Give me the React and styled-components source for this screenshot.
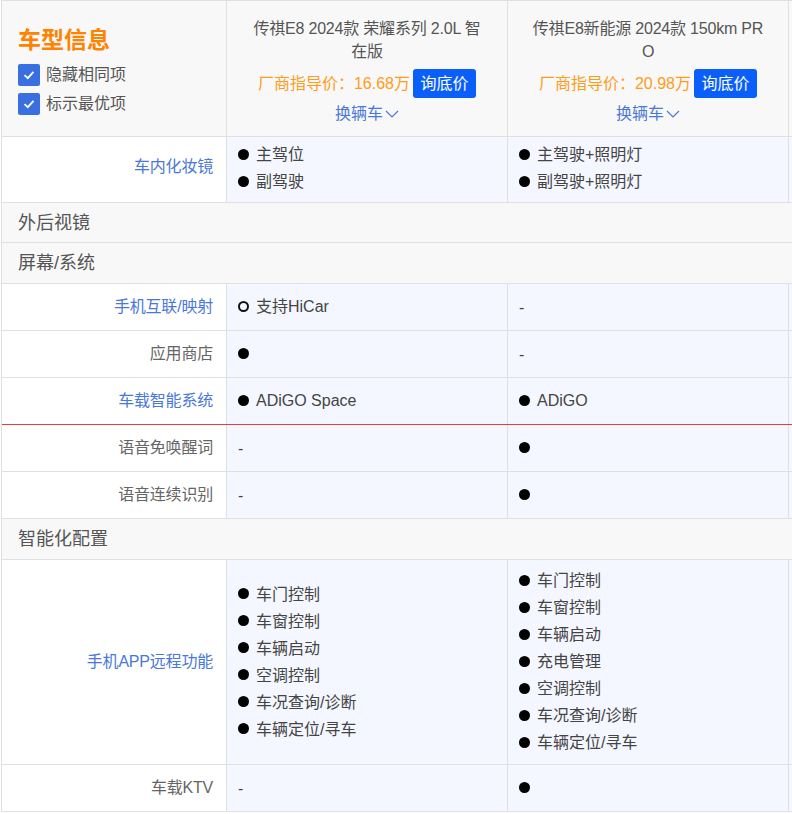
import React from 'react';
import styled, { createGlobalStyle } from 'styled-components';

const GlobalStyle = createGlobalStyle`
  html, body {
    margin: 0;
    padding: 0;
    background: #fff;
    overflow: hidden;
  }
  * { box-sizing: border-box; }
`;

const Page = styled.div`
  width: 792px;
  height: 814px;
  overflow: hidden;
  position: relative;
  padding-left: 1px;
  font-family: "Liberation Sans", "Noto Sans CJK SC", sans-serif;
  font-size: 16px;
  line-height: 20px;
  color: #555;
`;

const RedLine = styled.div`
  position: absolute;
  left: 2px;
  right: 0;
  top: 424px;
  height: 1px;
  background: #f03a3a;
`;

const Row = styled.div`
  display: grid;
  grid-template-columns: 225px 281px 281px 20px;
  width: 808px;
  height: ${(p) => p.$h}px;
  border-bottom: 1px solid #e0e0e0;
  border-left: 1px solid #e0e0e0;
`;

const HeadRow = styled(Row)`
  border-top: 1px solid #e0e0e0;
  background: #f8f8f8;
`;

const HeadCorner = styled.div`
  padding: 24px 0 0 16px;
  border-right: 1px solid #e0e0e0;
`;

const Title = styled.div`
  font-size: 23px;
  line-height: 30px;
  font-weight: 700;
  color: #ff8200;
  margin-bottom: 5px;
`;

const CheckRow = styled.label`
  display: flex;
  align-items: center;
  gap: 6px;
  height: 29px;
  color: #555;
`;

const CheckBox = styled.span`
  width: 22px;
  height: 22px;
  border-radius: 2px;
  background: #3a6fe2;
  display: flex;
  align-items: center;
  justify-content: center;
`;

const CarCell = styled.div`
  padding: 16px 20px 0;
  text-align: center;
  border-right: 1px solid #e0e0e0;
  word-break: break-all;
`;

const CarName = styled.div`
  line-height: 23px;
  letter-spacing: -0.2px;
  color: #555;
`;

const PriceLine = styled.div`
  display: flex;
  align-items: center;
  justify-content: center;
  gap: 3px;
  margin-top: 6px;
  margin-inline: -10px;
  color: #ff9c1a;
`;

const AskButton = styled.button`
  width: 63px;
  height: 29px;
  padding: 0;
  border: none;
  border-radius: 3px;
  background: #0a5ffb;
  color: #fff;
  font: inherit;
`;

const SwapLink = styled.div`
  display: flex;
  align-items: center;
  justify-content: center;
  gap: 2px;
  margin-top: 5px;
  line-height: 22px;
  color: #4a78d8;
`;

const Label = styled.div`
  display: flex;
  align-items: center;
  justify-content: flex-end;
  padding-right: 13px;
  padding-bottom: ${(p) => p.$lift}px;
  letter-spacing: -0.2px;
  background: #fff;
  border-right: 1px solid #e0e0e0;
  color: ${(p) => (p.$link ? '#4a78d8' : '#666')};
`;

const Cell = styled.div`
  display: flex;
  flex-direction: column;
  justify-content: center;
  padding-left: 11px;
  padding-bottom: ${(p) => p.$lift || 0}px;
  background: #f4f7ff;
  border-right: 1px solid #e0e0e0;
`;

const Item = styled.div`
  display: flex;
  align-items: center;
  height: 27px;
  color: #444;
`;

const Dash = styled(Item)`
  padding-top: 2px;
`;

const Dot = styled.span`
  width: 11px;
  height: 11px;
  border-radius: 50%;
  flex: none;
  margin-right: ${(p) => (p.$text ? 7 : 0)}px;
  margin-bottom: 2px;
  background: ${(p) => (p.$hollow ? 'transparent' : '#000')};
  border: ${(p) => (p.$hollow ? '2px solid #111' : 'none')};
`;

const Section = styled.div`
  display: flex;
  align-items: center;
  width: 808px;
  height: ${(p) => p.$h}px;
  padding-left: 16px;
  font-size: 18px;
  background: #f8f8f8;
  color: #555;
  border-left: 1px solid #e0e0e0;
  border-bottom: 1px solid #e0e0e0;
`;

function Check() {
  return (
    <CheckBox>
      <svg width="14" height="14" viewBox="0 0 14 14" fill="none">
        <path d="M2.5 7.2 L5.8 10.2 L11.5 3.8" stroke="#fff" strokeWidth="1.8" />
      </svg>
    </CheckBox>
  );
}

function Chevron() {
  return (
    <svg width="14" height="14" viewBox="0 0 14 14" fill="none">
      <path d="M1 4 L7 10 L13 4" stroke="#4a78d8" strokeWidth="1.2" />
    </svg>
  );
}

function Values({ items }) {
  if (items === '-') return <Dash>-</Dash>;
  return items.map((t) => (
    <Item key={t.text || 'dot'}>
      <Dot $text={!!t.text} $hollow={t.hollow} />
      {t.text}
    </Item>
  ));
}

const dots = (...names) => names.map((text) => ({ text }));

const DataRow = ({ h, label, link, lift = 1, cellLift, a, b }) => (
  <Row $h={h}>
    <Label $link={link} $lift={lift}>{label}</Label>
    <Cell $lift={cellLift}><Values items={a} /></Cell>
    <Cell $lift={cellLift}><Values items={b} /></Cell>
    <Cell />
  </Row>
);

export default function App() {
  return (
    <Page>
      <GlobalStyle />
      <HeadRow $h={137}>
        <HeadCorner>
          <Title>车型信息</Title>
          <CheckRow><Check />隐藏相同项</CheckRow>
          <CheckRow><Check />标示最优项</CheckRow>
        </HeadCorner>
        <CarCell>
          <CarName>传祺E8 2024款 荣耀系列 2.0L 智在版</CarName>
          <PriceLine>厂商指导价：16.68万<AskButton>询底价</AskButton></PriceLine>
          <SwapLink>换辆车<Chevron /></SwapLink>
        </CarCell>
        <CarCell>
          <CarName>传祺E8新能源 2024款 150km PRO</CarName>
          <PriceLine>厂商指导价：20.98万<AskButton>询底价</AskButton></PriceLine>
          <SwapLink>换辆车<Chevron /></SwapLink>
        </CarCell>
        <CarCell />
      </HeadRow>
      <DataRow h={66} lift={6} cellLift={2} label="车内化妆镜" link a={dots('主驾位', '副驾驶')} b={dots('主驾驶+照明灯', '副驾驶+照明灯')} />
      <Section $h={40}>外后视镜</Section>
      <Section $h={41}>屏幕/系统</Section>
      <DataRow h={47} label="手机互联/映射" link a={[{ text: '支持HiCar', hollow: true }]} b="-" />
      <DataRow h={47} label="应用商店" a={dots('')} b="-" />
      <DataRow h={47} label="车载智能系统" link a={dots('ADiGO Space')} b={dots('ADiGO')} />
      <DataRow h={47} label="语音免唤醒词" a="-" b={dots('')} />
      <DataRow h={47} label="语音连续识别" a="-" b={dots('')} />
      <Section $h={41}>智能化配置</Section>
      <DataRow
        h={205}
        label="手机APP远程功能"
        link
        a={dots('车门控制', '车窗控制', '车辆启动', '空调控制', '车况查询/诊断', '车辆定位/寻车')}
        b={dots('车门控制', '车窗控制', '车辆启动', '充电管理', '空调控制', '车况查询/诊断', '车辆定位/寻车')}
      />
      <DataRow h={47} label="车载KTV" a="-" b={dots('')} />
      <RedLine />
    </Page>
  );
}
